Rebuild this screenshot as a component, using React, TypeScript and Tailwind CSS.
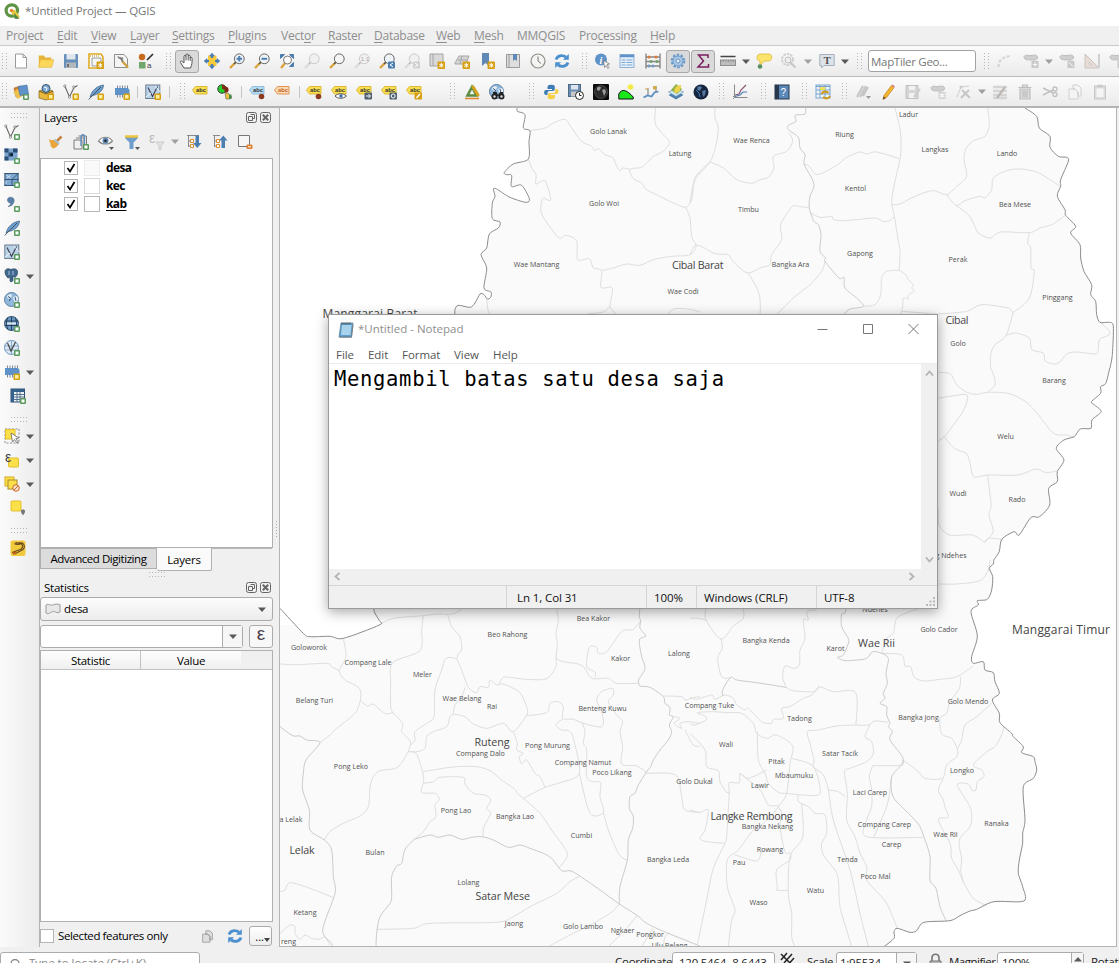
import React from "react";

/* ---------- geometry helpers ---------- */

function smooth(points: string, close = "") {
  const p = points.trim().split(/\s+/).map((s) => s.split(",").map(Number));
  let d = `M${p[0][0]} ${p[0][1]}`;
  for (let i = 0; i < p.length - 1; i++) {
    const a = p[Math.max(0, i - 1)], b = p[i], c = p[i + 1], e = p[Math.min(p.length - 1, i + 2)];
    const k = 7;
    d += `C${(b[0] + (c[0] - a[0]) / k).toFixed(1)} ${(b[1] + (c[1] - a[1]) / k).toFixed(1)} ${(c[0] - (e[0] - b[0]) / k).toFixed(1)} ${(c[1] - (e[1] - b[1]) / k).toFixed(1)} ${c[0]} ${c[1]}`;
  }
  return d + close;
}

type Sheet = { at: string; coast?: string; sea?: string; district: string[]; village: string[] };

const sheets: Sheet[] = [
  {
    at: "translate(280 108) scale(.33333)",
    coast: "712,0 712,10 735,20 730,60 750,68 747,100 745,153 700,168 673,193 680,200 695,202 693,232 700,236 725,232 748,272 738,283 690,268 650,243 640,243 645,265 637,285 637,332 660,342 655,360 628,378 620,420 603,440 620,480 612,540 633,552 632,568 622,573 612,560 600,558 585,585 570,598 535,592 525,605 525,630",
    sea: "L525 1500 L0 1500 L0 0Z",
    district: [],
    village: [
      "750,68 795,60 820,45 855,34 875,60 905,100 935,115 945,128 955,122 975,140 1000,150 1010,175 1020,188 1028,180 1050,184",
      "1127,0 1127,50 1166,98 1166,110 1150,130 1120,145 1105,160 1085,178 1050,184 1060,212 1085,225 1100,245 1150,270 1180,285 1217,298 1235,275 1243,215 1260,190 1290,162",
      "1217,298 1230,330 1235,385 1248,412 1243,428 1225,442 1175,445 1120,455 1080,472 1040,468 1000,480 965,488",
      "745,153 755,180 768,200 768,228 795,218 812,270 808,278 788,272 785,318 835,388 858,382 890,398 893,455 928,452 940,480 965,488 963,538 997,540 990,595 1005,615 1010,630",
      "990,595 970,612 920,618",
      "620,570 625,610 640,630",
      "1163,618 1185,602 1230,604 1260,612",
    ],
  },
  {
    at: "translate(690 108) scale(.33333)",
    coast: "1005,0 1040,25 1048,60 1080,85 1080,118 1105,145 1130,148 1135,160 1112,215 1112,235 1102,265 1125,305 1127,322 1157,355 1142,375 1170,410 1172,450 1182,490 1205,530 1202,560 1217,580 1220,620 1230,643 1258,643 1270,655 1267,740 1260,780",
    sea: "L1285 780 L1285 0Z",
    district: ["347,0 345,18 315,22 318,40 295,52 295,65 325,88 330,120 345,140 342,168 365,210 372,235 360,265 358,300 372,340 385,350 393,380 390,430 407,450 405,460 447,510 462,508 465,540 500,570 520,595 480,603 463,618"],
    village: [
      "75,0 75,30 85,60 77,115 60,162 15,215 0,285",
      "60,162 100,180 140,215 185,226 210,215 235,208 252,180 250,145 290,130 308,100 298,75",
      "342,168 358,175 382,200 440,172 470,148 510,132 530,138 560,132 628,152",
      "615,0 625,40 632,80 632,140 615,220 605,280 613,325 625,400 630,430 628,487",
      "605,290 630,288 660,272 700,255 732,248 770,260 800,235 830,205 822,155 828,122 850,98 885,85 898,50 893,0",
      "770,260 798,292 825,278 870,265 885,270 905,245 910,210 950,188 992,183 1040,192 1075,212 1110,235",
      "798,292 835,320 850,345 865,375 900,390 932,372 1018,374 1050,360 1085,350 1125,323",
      "1018,374 1013,405 1022,420 1023,480 1033,490 1018,570 970,612 955,600 875,590 830,610 740,618 700,615 635,610",
      "628,487 648,500 655,515 670,530 665,540 673,548 655,562 655,573 640,570 638,595 633,618",
      "520,595 555,590 572,560 575,510 590,490 628,487",
      "358,312 390,328 425,325 430,335 460,338 500,335 555,330 580,340 600,338 613,325",
      "358,300 325,295 305,297 272,350 275,395 245,440 240,470 215,478 175,495 150,480 125,455 115,440 80,438 60,430 40,418 15,412 0,440",
      "175,495 205,550 211,590 210,618",
      "405,460 395,490 360,530 310,570 262,618",
      "970,612 948,683 915,710 902,740 902,780",
      "948,683 975,675 1018,690 1025,725 1060,735 1065,758 1090,768 1110,762 1130,738 1160,732 1215,738 1225,725 1228,695 1258,680 1255,665 1230,643",
    ],
  },
  {
    at: "translate(320 305) scale(.50955 .33333)",
    coast: "1550,189 1542,235 1532,245 1532,265 1514,290 1520,300 1533,320 1515,345 1513,370 1492,372 1480,395 1460,405 1445,430 1460,465 1447,500 1447,530 1430,550 1432,600 1412,635 1395,638 1372,690 1362,680 1338,703 1333,740 1322,765",
    sea: "L1561 765 L1561 189Z",
    district: [],
    village: [
      "1316,189 1322,210 1325,240 1310,262",
      "1195,203 1235,205 1250,240 1270,262 1290,268 1310,262 1350,265 1385,290 1410,330 1440,385 1465,390 1480,398",
      "1195,285 1240,273 1270,270 1265,310 1248,350 1225,395 1205,415",
      "1225,395 1245,430 1268,445 1275,470 1283,515 1310,510 1370,510 1405,492 1425,503 1447,497",
      "1310,510 1317,600 1313,630 1321,680 1304,712 1312,700 1338,703",
      "1205,590 1213,610 1215,660 1235,690 1280,690 1304,712",
    ],
  },
  {
    at: "translate(280 600) scale(.33333)",
    coast: "0,25 70,100 90,110 150,109 190,115 298,75 298,62 283,35 280,0",
    sea: "L0 0Z",
    district: [
      "0,380 20,395 40,408 60,408 80,420 120,428 78,480 70,520 68,570 88,630 90,690 133,720 155,750 160,830 165,880 128,990 155,1030 155,1040",
      "1075,240 1080,258 1110,262 1150,290 1155,310 1170,322 1168,345 1180,350 1168,375 1175,395 1165,420 1140,450 1120,480 1112,500 1100,515 1075,555 1065,580 1050,590 1048,625 1060,650 1058,685 1045,720 1042,780 1020,860 1018,912",
      "403,718 450,705 475,712 510,705 545,718 575,712 605,710 640,720 685,742 720,735 750,745 790,760 815,775 845,812 870,812 895,825 960,870 1018,912 1070,945 1100,970 1160,998 1260,1038",
      "403,718 375,748 365,790 350,798 335,830 335,890 330,910 300,950 290,1000 288,1040",
      "1080,20 1078,50 1082,62 1080,85 1097,108 1078,120 1085,170 1095,205 1075,240",
    ],
    village: [
      "190,115 198,170 178,212 195,240 225,255 240,268 242,295 232,330 215,350 170,385 150,405 120,428",
      "0,192 50,194 140,190 155,200 178,212",
      "298,75 340,55 430,47 470,42 503,43 525,40 545,28",
      "430,47 425,90 420,152 338,188 332,250 332,320 340,340",
      "240,300 262,318 280,312 300,330 320,342 340,340 368,372 365,395 392,432 355,500 300,512 280,530 270,560 265,620 240,648 190,670 150,695 133,720",
      "503,43 515,80 540,110 545,150 535,160 530,175 510,172 495,178 485,210 465,270 462,350 440,370 405,395 405,420 392,435",
      "530,175 545,210 565,262 590,278 600,260 625,262 630,240 650,255 670,252 720,278 740,322 740,345 700,395 670,370 620,385 580,372 555,350 520,342",
      "555,262 545,290 525,315 520,342",
      "520,342 510,350 500,380 460,395 440,410 435,445 410,455 385,455 410,462 430,525 430,550",
      "655,255 670,232 690,232 740,238 800,236 828,200 828,175 832,130 828,100 835,60 828,20",
      "828,175 850,185 895,192 915,205 935,235 985,235 1010,250 1075,250",
      "945,232 945,215 920,200 928,142 950,142 955,160 980,155 1020,100 1035,90 1060,88 1082,62",
      "1150,288 1205,290 1215,300 1245,292 1260,290",
      "1180,350 1200,355 1182,370 1205,385 1200,370 1225,365 1260,370",
      "1215,390 1225,410 1240,435 1260,440",
      "740,347 800,338 810,310 835,305 850,320 848,355 880,358 910,370 965,380 968,345 950,300 965,275 998,265 1000,285 985,305 1010,345 1028,365 1020,395 1028,440 1025,492 1070,498 1100,518",
      "1100,520 1170,520 1195,535 1205,590 1215,630 1260,637",
      "848,357 828,374 845,390 865,392 880,415 898,520 840,548 795,562 730,595",
      "700,395 712,430 710,450 730,460 718,470 725,492 740,480 765,520 780,530 795,562",
      "430,515 470,508 530,500 590,500 630,512 665,540 705,568 710,578 730,595 780,640 815,690 862,760 838,803",
      "430,550 460,545 480,532 550,532 555,552 580,580 615,585 632,600 620,625 632,640 612,680 608,712",
      "430,550 425,578 465,580 478,598 465,615 468,650 450,665 430,695 403,718",
      "290,988 400,985 450,970 648,967 700,950 750,920 830,880 870,845 900,828",
      "1018,912 990,940 930,975 870,1005 805,1040",
      "1072,945 1040,985 985,1040",
      "1120,985 1085,1040",
      "1170,998 1155,1010 1150,1040",
      "905,365 915,395 910,430 920,450 920,530 940,545 962,548 960,590 970,637 930,640 898,520",
      "970,637 985,690 1010,750 1025,772 1042,780",
      "0,875 15,870 30,848 90,865 160,893",
      "0,1000 30,975 45,980 45,1000 60,1018 75,1005 95,1015 115,1018 135,1012 150,1035",
    ],
  },
  {
    at: "translate(690 560) scale(.33333)",
    coast: "911,0 910,12 898,25 908,50 905,90 892,118 862,122 865,135 843,155 862,228 845,290 850,310 880,305 885,330 910,338 915,365 928,400 907,420 928,460 930,488 965,520 970,530 1000,560 995,578 1030,590 1035,605 1040,630 1030,655 1000,680 1005,780 998,820 998,850 988,900 985,940 998,980 1002,1023 912,1025 860,1048 840,1053 810,1067 780,1082 702,1087 680,1112 660,1117 622,1105 612,1115 612,1135 582,1160",
    sea: "L1285 1160 L1285 0Z",
    district: [
      "468,145 465,160 455,162 455,200 475,235 475,250 460,285 442,292 465,302 500,300 530,295 548,275 575,280 595,295 588,340 592,370 580,400 585,415 570,430 590,440 590,465 600,490 595,500 607,515 600,540 640,600 605,650 608,708 640,745 670,775 690,800 705,840 720,890 720,960 738,985 750,1040 768,1082",
      "98,408 98,390 122,352 140,360 200,368 288,382",
    ],
    village: [
      "745,72 800,72 870,62 895,30 900,0",
      "48,145 48,180 93,237 130,198 160,175 160,145",
      "0,175 25,175 48,180",
      "93,237 97,265 83,295 95,350 122,354",
      "288,382 278,350 285,318 310,325 328,315 330,270 345,235 340,180 355,180 350,155 380,150",
      "288,382 310,392 370,395 388,380 430,395 497,398 498,495",
      "575,280 590,235 610,220 620,175 660,155 690,145",
      "575,280 635,285 645,318 662,320 672,350 700,363 750,358 800,350 850,318",
      "812,350 808,385 780,425 770,460 750,475 755,522 785,535 802,567 800,590 770,615 757,655 705,655 685,635 640,602 635,616 548,617",
      "905,430 860,470 825,495 815,540 802,567",
      "942,500 935,525 915,560 890,575 850,615 875,630 882,650 862,665 858,690 845,690 835,672 802,675 840,740 845,770 840,800 808,840 815,900 812,930 820,965",
      "760,655 745,690 760,720 765,742 775,772 745,780 780,850 785,895 805,930 820,965 850,1015 890,1037",
      "0,412 20,418 65,405 75,418 105,405 130,415 140,435 165,450 175,445 215,485 245,490 250,478 280,475 275,445 300,440 340,415 365,405 388,380",
      "0,490 15,495 48,480 45,468 22,458 70,455 110,458 155,460 190,490 200,520 230,535 260,525 308,558 300,610 290,700 265,740",
      "202,515 205,600 225,640 235,670 265,697 290,700 340,705 390,700 370,620 305,595",
      "0,520 45,570 50,620 85,632 90,665 108,695 118,697",
      "498,495 440,498 385,510 352,515 360,550 372,600 370,620 400,645 415,690 430,780 480,930 510,1060 535,1160",
      "498,495 535,495 555,483 595,487",
      "540,495 525,530 545,545 550,580 530,605 480,625 463,635 472,700 470,780 495,830 510,880 530,920 530,960 560,995 590,1030 622,1105",
      "548,617 538,650 545,690 545,740 530,780 530,830 700,832",
      "605,650 600,690 590,740 552,830",
      "415,690 445,695 465,710",
      "118,695 118,668 148,668 150,640 175,655 230,630",
      "118,695 110,830 105,850 70,925 50,1020 22,1155",
      "150,640 210,690 235,735 265,740 220,790 190,810 145,870 112,900 112,980 135,1050 125,1080 115,1160",
      "135,885 200,903 215,875 230,870",
      "265,740 275,760 270,800 285,875 300,880 300,900 260,930 262,980 260,990 295,992",
      "325,705 325,725 355,740 375,760 405,765 410,820 395,850 400,885 435,930 445,960 450,1040 470,1110 485,1160",
      "335,730 340,800 335,840 300,890 295,1000 305,1060 305,1130 315,1160",
      "0,750 30,757 55,750 45,810 30,835 50,845 105,850",
    ],
  },
];

const villages: [string, number, number][] = [
  ["Golo Lanak", 608.5, 132], ["Latung", 680, 154], ["Golo Woi", 604, 204], ["Wae Mantang", 536.5, 265], ["Wae Codi", 683, 292],
  ["Wae Renca", 751.5, 141], ["Riung", 844.5, 135], ["Ladur", 908.5, 115], ["Langkas", 935, 150], ["Lando", 1007, 154],
  ["Kentol", 855.5, 188.5], ["Timbu", 748.5, 210], ["Bea Mese", 1015, 205], ["Bangka Ara", 790.5, 264.5], ["Gapong", 860, 254],
  ["Perak", 958, 260], ["Pinggang", 1057.5, 297.5], ["Golo", 958, 343.5], ["Barang", 1054, 380.5], ["Welu", 1005.5, 436.5],
  ["Wudi", 958, 494], ["Rado", 1017, 500], ["g Ndehes", 951, 556], ["Ndehes", 875, 610], ["Beo Rahong", 507.5, 635],
  ["Bea Kakor", 593.5, 619], ["Goloworok", 309, 647.5], ["Compang Lale", 368, 662.5], ["Meler", 422.5, 674.5], ["Kakor", 620.5, 659],
  ["Lalong", 679, 653.5], ["Belang Turi", 314.5, 701], ["Wae Belang", 462, 699], ["Rai", 492, 707], ["Benteng Kuwu", 602.5, 709],
  ["Compang Tuke", 709.5, 705.5], ["Pong Murung", 547.5, 746], ["Compang Dalo", 480.5, 754], ["Pong Leko", 351, 767],
  ["Compang Namut", 583, 763], ["Poco Likang", 612, 773], ["Golo Dukal", 694.5, 782], ["Pong Lao", 456, 811], ["Bangka Lao", 515, 816.5],
  ["Cumbi", 581.5, 836], ["a Lelak", 291, 820], ["Bulan", 375, 853], ["Bangka Leda", 668, 860], ["Lolang", 468.5, 882.5],
  ["Ketang", 305, 912.5], ["Jaong", 514, 924], ["Golo Lambo", 583, 927], ["Ngkaer", 622.5, 931], ["Pongkor", 650, 935],
  ["Ulu Belang", 669.5, 946], ["reng", 288.5, 942], ["Bangka Kenda", 766, 641], ["Karot", 835.5, 649], ["Golo Cador", 939, 630],
  ["Golo Mendo", 968, 702], ["Bangka Jong", 918.5, 718], ["Tadong", 799.5, 719], ["Wali", 726, 744.5], ["Satar Tacik", 840, 753.5],
  ["Pitak", 776.5, 761.5], ["Mbaumuku", 794, 776], ["Lawir", 760, 786], ["Longko", 962, 770.5], ["Laci Carep", 870, 793],
  ["Compang Carep", 884.5, 825], ["Wae Rii", 945.5, 834.5], ["Ranaka", 996.5, 824], ["Carep", 891.5, 845], ["Bangka Nekang", 767.5, 826.5],
  ["Rowang", 770, 849.5], ["Pau", 739, 862.5], ["Tenda", 847.5, 859.5], ["Poco Mal", 875.5, 876.5], ["Watu", 815.5, 890.5], ["Waso", 758.5, 903],
];

const districts: [string, number, number, number][] = [
  ["Cibal Barat", 672, 268.5, 51.5], ["Cibal", 945.5, 324, 23], ["Wae Rii", 858, 647, 37], ["Ruteng", 474.5, 745.5, 35],
  ["Lelak", 289.5, 853.5, 25], ["Satar Mese", 475.5, 899.5, 54.5], ["Langke Rembong", 710.5, 819.5, 82],
];

function MapCanvas() {
  return (
    <svg className="block h-full w-full" viewBox="280 108 836 838" preserveAspectRatio="xMinYMin slice">
      <rect x="280" y="108" width="837" height="840" fill="#fafafa" />
      <rect x="280" y="300" width="60" height="325" fill="#fff" />
      {sheets.map((s, i) => (
        <g key={i} transform={s.at} fill="none" strokeLinejoin="round">
          {s.coast && <path d={smooth(s.coast, s.sea)} fill="#fff" />}
          {s.village.map((v, j) => <path key={j} d={smooth(v)} stroke="#dedede" vectorEffect="non-scaling-stroke" />)}
          {s.district.map((v, j) => <path key={j} d={smooth(v)} stroke="#cbcbcb" vectorEffect="non-scaling-stroke" />)}
          {s.coast && <path d={smooth(s.coast)} stroke="#8c8c8c" vectorEffect="non-scaling-stroke" />}
        </g>
      ))}
      <g fontFamily="'Open Sans', 'Noto Sans', sans-serif" fill="#505050">
        {villages.map(([t, x, y]) => (
          <text key={t + x} x={x} y={y + 2} fontSize="7.1" textAnchor="middle">{t}</text>
        ))}
        {districts.map(([t, x, y, w]) => (
          <text key={t} x={x} y={y} fontSize="10.7" textLength={w} fill="#454545">{t}</text>
        ))}
        <text x="1012" y="634" fontSize="12" textLength="98" fill="#454545">Manggarai Timur</text>
        <text x="322.5" y="318" fontSize="12" textLength="95" fill="#454545">Manggarai Barat</text>
      </g>
    </svg>
  );
}

/* ---------- icons, 16 x 16 grid ---------- */

const lens = (c: string, h: string, f = "#eef4f8") => (
  <>
    <path d="M6.500 9.500 1 15" stroke={h} strokeWidth="2.400" />
    <path d="M6.800 9.200 5 11" stroke="#555" strokeWidth="1.600" opacity={c === "#666" ? 1 : 0.25} />
    <circle cx="10.300" cy="5.800" r="4.900" fill={f} stroke={c} />
  </>
);
const plus = (
  <g>
    <rect x="10" y="10" width="6" height="6" rx="1" fill="#5a9a5e" />
    <rect x="11.500" y="11.500" width="3" height="3" fill="#fff" />
  </g>
);
const gold = (
  <g>
    <rect x="9.500" y="9.500" width="6.500" height="6.500" rx="1" fill="#d6a012" />
    <rect x="11" y="11" width="3.500" height="3.500" fill="#fff0a0" />
  </g>
);
const star = (
  <g>
    <rect x="8.500" y="8.500" width="7.500" height="7.500" rx="1" fill="#d6a012" />
    <path d="M12.300 10v4.600M10.300 11.200l4 2.400M14.300 11.200l-4 2.400" stroke="#fff" />
  </g>
);
const vee = (
  <>
    <path d="M2 2.500 6.500 13 11 3.500 14.500 1.500" fill="none" stroke="#666" strokeWidth="1.100" />
    <g fill="#fff" stroke="#777" strokeWidth=".8"><circle cx="1.800" cy="2" r="1.100" /><circle cx="6.500" cy="13.200" r="1.100" /><circle cx="10.800" cy="3" r="1.100" /></g>
  </>
);
const feather = (
  <>
    <path d="M2 13C4 6 9 2 15.500 1c0 5-5 10-11.500 10.500z" fill="#6f9fcd" stroke="#3c6186" strokeWidth=".7" />
    <path d="M.7 15.500 13 3" stroke="#3a4a5a" strokeWidth=".9" />
  </>
);
const chip = (
  <>
    <path d="M3.500 1.500v12M6 1.500v12M8.500 1.500v12M11 1.500v12M13.500 1.500v12" stroke="#7d8b98" />
    <path d="M1 4h13l1.500 2v5H1z" fill="#5f92c8" />
  </>
);
const vbox = (
  <>
    <rect x=".8" y="1" width="14" height="13.500" fill="#b9d2e8" stroke="#6c7d8d" />
    <path d="M3 3.500 7.500 12.500 12.500 2.500" fill="none" stroke="#445" strokeWidth="1.200" />
    <path d="m1 13 5-4M10 2l5 6" stroke="#f3f8fc" />
  </>
);
const globe = (
  <>
    <circle cx="7.500" cy="7.500" r="7" fill="#8fb8dc" stroke="#5e81a3" />
    <path d="M3 4c2-2 4-2 5-1L7 6 5 7 3.500 6zM9 5l4-1 1.500 3-2 4-2-1-1-3z" fill="#e9eff4" />
    <path d="M4 4.500 6.500 6 5.500 9M11 5l1 4" stroke="#34597c" fill="none" />
  </>
);
const tag = (f: string, s: string, t = "#333") => (
  <>
    <path d="M.5 6 3.500 2.500h11.500v7.500h-11.500z" fill={f} stroke={s} strokeWidth=".8" />
    <text x="4" y="8.300" fontSize="5.800" fontWeight="700" fill={t} fontFamily="'Liberation Sans', sans-serif">abc</text>
  </>
);
const blob = <path d="M1 3.500C3 1 5 3 8 2.500s6-1 6.500 1.500-3 3.500-6 3-7 1-7.500-3.500z" fill="#cfcfcf" stroke="#bdbdbd" />;
const sheet2 = (c: string, f: string) => <path d="M2 5h6l3 3v7H2zM6 1h5l3 3v8h-3V8L8 5H6z" fill={f} stroke={c} strokeWidth=".9" />;
const refresh = (
  <g fill="none" stroke="#4b8fcf" strokeWidth="2.800">
    <path d="M2 6.500C3.500 2.500 8 1.500 12 4" /><path d="M14 9.500c-1.500 4-6 5-10 2.500" />
    <path d="M14.800 1v5.800H9zM1.200 15V9.200H7z" fill="#4b8fcf" stroke="none" />
  </g>
);

const icons: Record<string, React.ReactNode> = {
  new: <path d="M2.500 1h7.500l3.500 3.500V15h-11zM10 1v3.500h3.500" fill="#fff" stroke="#9a9a9a" />,
  open: <><path d="M.8 14V2.500h5l1.500 2h6V7" fill="#e6b33a" /><path d="m.8 14.300 1.500-7.500h13.400l-2 7.500z" fill="#fbd75b" stroke="#e7b93c" strokeWidth=".7" /></>,
  save: <><rect x="1" y="1" width="14" height="14" rx="1" fill="#668fbb" /><rect x="3.500" y="1" width="9" height="5.500" fill="#dfe6ec" /><rect x="3" y="9.500" width="10" height="5.500" fill="#b3b8bd" /><path d="M5 11v3" stroke="#555" strokeWidth="1.500" /></>,
  layout: <><path d="M1 1h12l2 3v11H1z" fill="#fff" stroke="#e0aa25" strokeWidth="1.600" /><path d="M4 5h9v8H4z" fill="#f6f6f6" stroke="#999" /><path d="M2 3h10" stroke="#b58a20" strokeDasharray="1 1" />{star}</>,
  layouts: <><path d="M1.500 1.500H11l3.500 4v9h-13z" fill="#f4f4f4" stroke="#8e8e8e" /><path d="m9 8 6 6.500" stroke="#cf9f36" strokeWidth="2.200" /><path d="M5 3.500c1 2 3.500 2.500 5 1.500M7 4.500l3 4" stroke="#777" strokeWidth="1.600" fill="none" /></>,
  style: <><circle cx="4" cy="4" r="3.200" fill="#c76a1c" /><path d="m9 7 6-6" stroke="#333" strokeWidth="1.700" /><rect x="1" y="9" width="6.500" height="6.500" fill="#70a76a" /><text x="9" y="15" fontSize="8" fill="#444" fontFamily="'Liberation Sans', sans-serif">a</text></>,
  hand: <path d="M5 15 1.500 9.500c-.6-1.500 1-2 2-.8L5 10V3.500c0-1.500 1.800-1.500 2 0V2c.2-1.500 2-1.500 2.200 0v1c.3-1.200 2-1 2 .3V5c.3-1 1.900-.8 1.900.5 0 4 0 6-1.600 9.500zM7 3.500v4M9.200 3v4.500M11.200 4v4" fill="#fff" stroke="#444" strokeWidth=".9" />,
  pansel: <><path d="M4 2.500h8.500v10.500H4z" fill="#f5cb3c" /><path d="M8 .3 10.200 3H5.800zM8 15.700 10.200 13H5.800zM.3 8 3 5.800v4.400zM15.700 8 13 5.800v4.400z" fill="#4d7eb0" stroke="#4d7eb0" /><path d="M8 3v2M8 11v2M3 8h2M11 8h2" stroke="#4d7eb0" strokeWidth="2.200" /></>,
  zin: <>{lens("#666", "#d9a43a")}<path d="M10.300 3v5.600M7.500 5.800h5.600" stroke="#4d7eb0" strokeWidth="2" /></>,
  zout: <>{lens("#666", "#d9a43a")}<path d="M7.500 5.800h5.600" stroke="#4d7eb0" strokeWidth="2" /></>,
  zfull: <><path d="M7 9 2 15" stroke="#d9a43a" strokeWidth="2.400" /><circle cx="8.500" cy="7" r="4" fill="#fff" stroke="#777" /><path d="M1.500 1.500h4l-4 4zM14.500 1.500v4l-4-4zM14.500 13.500h-4l4-4z" fill="#4d7eb0" stroke="#4d7eb0" /></>,
  zsel: lens("#c9c9c9", "#dcdcdc", "#f1f1f1"),
  zlayer: lens("#666", "#d9a43a", "#f5f5f5"),
  znat: <>{lens("#c9c9c9", "#dcdcdc", "#f1f1f1")}<text x="6.800" y="8" fontSize="6" fill="#aaa" fontFamily="'Liberation Sans', sans-serif">1:1</text></>,
  zlast: <>{lens("#666", "#d9a43a")}<rect x="9" y="8.500" width="7" height="7" rx="1" fill="#4d7eb0" /><path d="m14 10-3 2 3 2" stroke="#fff" fill="none" /></>,
  znext: <>{lens("#c9c9c9", "#dcdcdc", "#f1f1f1")}<rect x="9" y="8.500" width="7" height="7" rx="1" fill="#d0d0d0" /><path d="m11 10 3 2-3 2" stroke="#fff" fill="none" /></>,
  mapview: <><path d="M1 1h13v12H1zM4 1v12" fill="#d9d9d9" stroke="#a4a4a4" />{star}</>,
  map3d: <><path d="m1 10 4-7h10l-3 8H1zM4 7h10M8 3l-2 8" fill="#d4d4d4" stroke="#a8a8a8" />{star}</>,
  bmnew: <><path d="M3 0h7v13l-3.500-3L3 13z" fill="#5f88b6" />{star}</>,
  bm: <><path d="M1.500 1.500h13v13h-13zM4 1.500v13" fill="#dedede" stroke="#999" /><path d="M8 1h4v7L10 6.500 8 8z" fill="#5f88b6" /></>,
  clock: <><circle cx="8" cy="8" r="7" fill="#f4f4f2" stroke="#8f8f88" strokeWidth="1.200" /><path d="M8 3.500V8l3 2.500" fill="none" stroke="#777" /></>,
  refresh,
  identify: <><circle cx="7" cy="6.500" r="6" fill="#5f92c8" /><text x="5.400" y="10.500" fontSize="10" fontStyle="italic" fontWeight="700" fill="#fff" fontFamily="'Liberation Serif', serif">i</text><path d="m9.500 7.500 1 7 1.500-2 2 3 1-1-2-3 2.500-.5z" fill="#fff" stroke="#777" strokeWidth=".8" /></>,
  table: <><rect x="1" y="1.500" width="14" height="13" fill="#e6f0f9" stroke="#8db2d6" /><path d="M1 3h14" stroke="#5f92c8" strokeWidth="2.500" /><path d="M2.500 7h4M7.500 7h6M2.500 9.500h4M7.500 9.500h6M2.500 12h4M7.500 12h6" stroke="#7ca7d1" /></>,
  abacus: <><path d="M1 .5v15M15 .5v15M1 4h14M1 8.500h14M1 13h14" stroke="#888" strokeWidth="1.400" /><g fill="#d97c3c"><circle cx="4" cy="4" r="1.600" /><circle cx="11" cy="4" r="1.600" /></g><g fill="#6ea069"><circle cx="6" cy="8.500" r="1.600" /><circle cx="12" cy="8.500" r="1.600" /></g><g fill="#7598c0"><circle cx="4" cy="13" r="1.600" /><circle cx="8" cy="13" r="1.600" /></g></>,
  gear: <><circle cx="8" cy="8" r="6.300" fill="none" stroke="#6a9acb" strokeWidth="2" strokeDasharray="2.500 1.450" /><circle cx="8" cy="8" r="5" fill="#a9c8e6" stroke="#6a9acb" /><circle cx="8" cy="8" r="2" fill="#e8eef4" stroke="#6a9acb" /></>,
  sigma: <path d="M13 5V2H3.500L8.500 8 3 14h10.500V11" fill="none" stroke="#7b1d60" strokeWidth="1.500" />,
  ruler: <><path d="M.5 3.500h15" stroke="#444" strokeWidth="1.500" /><rect x=".5" y="7" width="15" height="5.500" fill="#bdbdbd" stroke="#8f8f8f" /><path d="M.5 8h15" stroke="#777" strokeDasharray="1 1.500" /></>,
  tip: <><path d="M4 1h9c4 0 3.500 7-.5 7H8l-4 5V8C-.5 7.500.5 1 4 1z" fill="#fbe46b" stroke="#dcb93c" strokeWidth=".8" /><circle cx="4" cy="13.500" r="2.300" fill="#5a8f63" /></>,
  act: <><circle cx="6.500" cy="6.500" r="5.500" fill="none" stroke="#cfcfcf" strokeWidth="2" strokeDasharray="2.500 1" /><circle cx="7" cy="7" r="3" fill="#eee" stroke="#bdbdbd" /><path d="m9 9 5.500 5.500" stroke="#c5c5c5" strokeWidth="2" /></>,
  text: <><path d="M.8 1.500h14.400v11H5l-2.500 2.500V12.500H.8z" fill="#dde3e8" stroke="#a6b0ba" /><text x="4.500" y="11" fontSize="11" fontWeight="700" fill="#555" fontFamily="'Liberation Serif', serif">T</text></>,
  d1: <path d="M1.500 14c0-7 4-10 12-11" fill="none" stroke="#d2d2d2" strokeWidth="2" strokeDasharray="3 1.800" />,
  d2: <>{blob}<rect x="8.500" y="8" width="7" height="7" fill="#c9c9c9" /><path d="M10 11.500h4M12 9.500v4" stroke="#fff" /></>,
  d3: <>{blob}<rect x="8.500" y="8" width="7" height="7" fill="#c9c9c9" /><path d="m10 9.500 4 4" stroke="#fff" /></>,
  d4: <><path d="M1 1v14h14z" fill="#e9dcd6" stroke="#c9c3c0" /><path d="M5 9v3h3z" fill="#fafafa" stroke="#ccc" /><path d="M15 1v14" stroke="#d0d0d0" strokeWidth="2" /></>,
  addlayers: <><path d="m1 4 7-2 3 9-8 2z" fill="#d9822b" stroke="#a95f1a" strokeWidth=".6" /><path d="m.5 8 4-3 5 7-5 3z" fill="#ecc04a" /><path d="m5 2.500 9-1.500 1.500 9L7 11.500z" fill="#5f92c8" stroke="#44719f" strokeWidth=".6" />{plus}</>,
  gpkg: <><path d="m1 7 7-2 7 2v7l-7 2-7-2z" fill="#e8b93e" stroke="#7d6420" strokeWidth=".7" /><path d="m1 7 7 3 7-3" fill="none" stroke="#7d6420" /><circle cx="8" cy="4.500" r="4" fill="#7da9d4" stroke="#34526f" /><path d="m6 3 3 1-1 3" stroke="#fff" fill="none" />{gold}</>,
  vnew: <>{vee}{gold}</>, feathernew: <>{feather}{gold}</>, chipnew: <>{chip}{gold}</>, vboxnew: <>{vbox}{gold}</>,
  tagy: tag("#fbe152", "#d6ab1e"), tago: tag("#f9d9b8", "#dd8030", "#c8651a"),
  tagb: <>{tag("#b8dcf4", "#7cb2d8")}<circle cx="12.500" cy="12.500" r="2.800" fill="#8c3a1e" /></>,
  tagpin: <>{tag("#fbe152", "#d6ab1e")}<circle cx="12.500" cy="12.500" r="2.800" fill="#8c3a1e" /></>,
  tageye: <>{tag("#fbe152", "#d6ab1e")}<path d="M4 12c3-3 8-3 11.500 0-3.500 3-8.500 3-11.500 0z" fill="#fff" stroke="#555" /><circle cx="10" cy="12" r="1.700" fill="#3b6ea5" /></>,
  tagmove: <>{tag("#fbe152", "#d6ab1e")}<rect x="8.500" y="8.500" width="7.500" height="7" rx="1" fill="#51606e" /><path d="M10 12h4M12.500 10l2 2-2 2" stroke="#fff" fill="none" /></>,
  tagrot: <>{tag("#fbe152", "#d6ab1e")}<rect x="8.500" y="8.500" width="7.500" height="7" rx="1" fill="#51606e" /><circle cx="12.200" cy="12" r="2" fill="none" stroke="#fff" /></>,
  tagedit: <>{tag("#fbe152", "#d6ab1e")}<rect x="8.500" y="8.500" width="7.500" height="7" rx="1" fill="#d6a012" /><path d="m10.500 14 3.500-4" stroke="#fff" strokeWidth="1.500" /></>,
  diagram: <><circle cx="5" cy="5" r="4.200" fill="#25d32d" stroke="#333" /><path d="M5 5V.8a4.200 4.200 0 0 1 4 5.200z" fill="#842d10" /><path d="M7.500 3C10 2 12 4 11.500 6.500S8 9 7.500 8z" fill="#7c2814" /><path d="M8 9h3l4 4-2 2H9z" fill="#e5c53c" stroke="#444" strokeWidth=".5" /><path d="M12 10.500h2.500v4.500H12z" fill="#4e8b4e" /></>,
  tri: <><path d="M8 3 3.500 11.500h9z" fill="none" stroke="#5b8d45" strokeWidth="2.600" /><path d="m8.500 2 6 10" stroke="#d1a21a" strokeWidth="3" /><path d="M1 14.500h14" stroke="#dd8a36" strokeWidth="1.600" /></>,
  binoc: <>{globe}<g fill="#222"><circle cx="5.500" cy="12.500" r="3" /><circle cx="12.500" cy="12.500" r="3" /><path d="M4 8h3.500l1.500 3 2-3h3v4H4z" /></g><g fill="#ddd"><circle cx="5.500" cy="12.500" r="1.200" /><circle cx="12.500" cy="12.500" r="1.200" /></g></>,
  python: <><path d="M8 .8c-3 0-3.500 1-3.500 2.500V5H9v1H3C.5 6 .5 11 3 11h1.500V9c0-1 .7-2 2-2H10c1 0 1.800-.7 1.800-2V3C11.800 1.500 11 .8 8 .8z" fill="#3f7db5" /><path d="M8.500 15.200c3 0 3.500-1 3.500-2.500V11H7.500v-1h6c2.500 0 2.500-5 .3-5h-1.500v2c0 1-.7 2-2 2H6.500c-1 0-1.800.7-1.800 2v2c0 1.500.8 2.200 3.800 2.200z" fill="#f7cf45" /></>,
  saveclock: <><rect x=".5" y=".5" width="12" height="12" fill="#6a8db3" stroke="#4f6983" /><rect x="3" y="1" width="7" height="4.500" fill="#dde6ee" /><rect x="3" y="7.500" width="7" height="5" fill="#c7c7c7" /><circle cx="11.500" cy="11.500" r="4" fill="#fff" stroke="#222" /><path d="M11.500 9v2.500h2" stroke="#222" fill="none" /></>,
  dark: <><rect width="16" height="16" rx="1" fill="#0b0b0b" /><circle cx="8" cy="8" r="6.500" fill="#2a2a2a" stroke="#666" strokeWidth=".6" /><path d="M4 4c2-2 4-1 4 0L6 7 4 6zM9 6l3-1 1 3-2 4-1-3z" fill="#999" /></>,
  green: <><path d="M.8 15V10C4 4 9 6 15.200 13v2z" fill="#1be81b" stroke="#111" /><circle cx="12.500" cy="3" r="2.500" fill="#f7ea45" /><path d="M12.500-.5v7M9 3h7M10 .5l5 5M15 .5l-5 5" stroke="#f7ea45" strokeWidth=".7" /></>,
  road: <><path d="m.5 13.500 4-2 4 1 3-4 4-1" fill="none" stroke="#5c8fc4" strokeWidth="1.800" /><path d="M5 11V4M13 8V2" stroke="#777" /><path d="M2 5h3M10.500 2.500h2.500v2.500h-2.500z" stroke="#c9a64e" fill="#dfb545" /></>,
  stack: <><path d="m8 7 7.500 4L8 15.500.5 11z" fill="#4c7fae" /><path d="m8 4 7.500 4L8 12.500.5 8z" fill="#cfe3f0" stroke="#5b8aae" strokeWidth=".6" /><path d="m8 0 6 5-5 5-6-4z" fill="#8cb347" /><path d="M7 9C5 5 8 1 13 1c0 5-2 8-6 8z" fill="#ecd34b" /></>,
  night: <><circle cx="8" cy="8" r="7.500" fill="#16263f" /><path d="M4 3.500c2-2 4-1 5 0L7 7 4.500 6zM9 7l4-1-1 5-2 2z" fill="#58779c" /><path d="m3 6 3 3 1 4" stroke="#3b7bb8" fill="none" /></>,
  plot: <><path d="M2.500.5v13h13M1 12l1.500 1.500L1 15" fill="none" stroke="#8a8a8a" /><path d="m3 11 4-1 2-4 5-5" fill="none" stroke="#8a5475" strokeWidth="1.200" /><path d="M3 12.500 8 11l3-3h4" fill="none" stroke="#4d7eb0" strokeWidth="1.200" /></>,
  book: <><rect x="1" y="1" width="14" height="14" fill="#5a86b8" stroke="#26384c" /><rect x="1" y="1" width="4" height="14" fill="#26384c" /><text x="6.500" y="12" fontSize="10" fill="#fff" fontFamily="'Liberation Sans', sans-serif">?</text></>,
  gridref: <><rect x="1" y="1" width="14" height="13" fill="#eef5fb" stroke="#7aa3cb" /><path d="M1 2.500h14M1 6h14M1 10h14M5 1v13M10 1v13" stroke="#7aa3cb" /><rect x="5" y="3" width="5" height="3" fill="#f4df5d" /><path d="M6.500 10c1-3 5-3 7-1M15 12c-1 3-5 3-7 1" fill="none" stroke="#cf9b1c" strokeWidth="2.200" /></>,
  pens: <><path d="M2 13 8 2M5 13l6-11M8 12l5-9" stroke="#c6c6c6" strokeWidth="2.200" /><path d="M11 12h5l-2.500 3z" fill="#999" /></>,
  pencil: <><path d="m3 15.500 1-4 7.500-10 2.500 2L6.500 13.500z" fill="#f3b62c" stroke="#b9791b" strokeWidth=".7" /><path d="m11.500 1.500 2.500 2 .9-1.200L12.400.5z" fill="#de7c8a" /><path d="m3 15.500.8-3 1.900 1.400z" fill="#5b4636" /></>,
  dsave: <><path d="M1 1.500h12v13H1z" fill="#d6d6d6" stroke="#c2c2c2" /><path d="M4 2h6v4H4zM4 9h6v5H4z" fill="#f2f2f2" /><path d="m9 13 6-8" stroke="#cbcbcb" strokeWidth="2" /></>,
  dadd: <>{blob}<rect x="8.500" y="8" width="7" height="7" fill="#d2d2d2" /><path d="M12 9v5M9.500 10l5 3M14.500 10l-5 3" stroke="#fff" /></>,
  dvert: <><path d="M1 13 5 3l8-1" fill="none" stroke="#cfcfcf" /><path d="m5 14 8-8M6 6l8 8" stroke="#c6c6c6" strokeWidth="2" /><circle cx="5" cy="3" r="1.500" fill="#ccc" /></>,
  dmulti: <><path d="M1 3h14M1 7h14M1 11h14M1 14h14" stroke="#d5d5d5" strokeWidth="2.500" /><path d="m5 14 8-11" stroke="#bdb6b3" strokeWidth="2.200" /></>,
  trash: <path d="M1.500 3.500h13M5.500 3V1h5v2M3 5h10v10H3zM6 6.500v7M8 6.500v7M10 6.500v7" fill="#dcdcdc" stroke="#bdbdbd" strokeWidth="1.200" />,
  cut: <><path d="m1 4 10 5M1 11l10-5" stroke="#c0c0c0" strokeWidth="1.500" /><circle cx="13" cy="5" r="2" fill="none" stroke="#c0c0c0" strokeWidth="1.300" /><circle cx="13" cy="10.500" r="2" fill="none" stroke="#c0c0c0" strokeWidth="1.300" /></>,
  copy: sheet2("#cdcdcd", "#f4f4f4"),
  copyd: sheet2("#8f8f8f", "#dedede"),
  paste: <><rect x="2.500" y="2" width="11" height="13" fill="#dcdcdc" stroke="#c8c8c8" /><rect x="4.500" y="4.500" width="7" height="8.500" fill="#f5f5f5" /><rect x="5.500" y=".8" width="5" height="2.500" fill="#c8c8c8" /></>,
  vadd: <>{vee}{plus}</>,
  raster: <><rect x=".5" y=".5" width="13" height="12" fill="#7ba4cf" /><path d="M.5.500h4v4h-4zM9 .5h4.500v4H9zM4.500 4.500H9v4H4.500zM.5 8.500h4v4h-4z" fill="#2e4f75" /><rect x="6.500" y="5.500" width="2.500" height="2.500" fill="#12202f" />{plus}</>,
  mesh: <><rect x=".5" y="1" width="14" height="13" fill="#7ea8d2" /><path d="M.5 1.500h14M.5 7.500h14M1 1v13M14 1v12M.5 13.500h10M8 7.500v6M8 7.500l6-6" fill="none" stroke="#2f4e6e" strokeWidth=".9" /><path d="m2.500 3 4 3M6.500 3l-4 3M2 9v3" stroke="#dce8f3" strokeWidth=".9" />{plus}</>,
  comma: <><path d="M5 1.500c4-1.500 6.500 2 4.500 5.500C8.500 9.500 6 10.500 4 10.500 6.500 9 7 8 6.500 7 3 7 2.500 2.500 5 1.500z" fill="#587fa8" stroke="#456789" strokeWidth=".5" />{plus}</>,
  featheradd: <>{feather}{plus}</>, vboxadd: <>{vbox}{plus}</>,
  pg: <><path d="M1 4C1 0 5 .5 7 1.500 10 0 14 1 13.500 4.500c0 2-1 4-2.500 5L9 8v4.500c-1 2-3 1.500-3 0V9L4 10C2 8 1 6 1 4z" fill="#41698f" stroke="#27435f" strokeWidth=".7" /><path d="M5 3v4M9 3v4" stroke="#a9c5df" />{plus}</>,
  globeadd: <>{globe}{plus}</>,
  wcs: <><circle cx="7.500" cy="7.500" r="7" fill="#6b98c5" stroke="#34526f" /><path d="M1 5h13M1 9.500h13M7.500.5v14M4 1.500c-2 4-2 8 0 12M11 1.500c2 4 2 8 0 12" fill="none" stroke="#25415c" /><path d="M3 6.500h9v2H3z" fill="#dbe7f1" />{plus}</>,
  wfs: <><circle cx="7.500" cy="7.500" r="7" fill="#dfeaf4" stroke="#6c94ba" /><path d="M1 6h13M1 10h13M7.500.5v14" stroke="#88adcf" /><path d="M3.500 3 7 11l4.500-9" fill="none" stroke="#444" strokeWidth="1.200" />{plus}</>,
  grid: <><rect x="1" y="1" width="13.500" height="13" fill="#eef3f8" stroke="#2f4f70" /><path d="M1 2.500h13.500M2.500 1v13" stroke="#34608c" strokeWidth="3" /><path d="M4 6.500h10M4 9h10M4 11.500h10M7 4v10M10 4v10" stroke="#54708c" />{plus}</>,
  selrect: <><rect x="1" y="1" width="14" height="14" fill="none" stroke="#8a8a8a" strokeDasharray="2 1.500" /><rect x="1.500" y="1.500" width="9.500" height="9.500" fill="#fbe04a" stroke="#e2bf2e" /><path d="m7 5 1.500 9 2-2.500 2.500 3.500 1.200-1-2.400-3.500 3-.5z" fill="#fff" stroke="#666" strokeWidth=".8" /></>,
  seleps: <><rect x="4.500" y="6" width="10" height="9" rx="1" fill="#fbe04a" stroke="#e2bf2e" /><text x="1" y="9.500" fontSize="14" fill="#444" fontFamily="'Liberation Sans', sans-serif">ε</text></>,
  desel: <><rect x="1" y="1" width="9" height="9" fill="#fbe04a" stroke="#d6ab1e" /><rect x="4" y="4" width="9" height="9" fill="#fbe04a" stroke="#a98a2b" /><circle cx="12" cy="12" r="3.300" fill="#f8ddc8" stroke="#d06c2a" /><path d="m10 14 4-4" stroke="#d06c2a" /></>,
  selloc: <><rect x="1" y="1" width="10" height="10" rx="1" fill="#fbe04a" stroke="#e2bf2e" /><path d="M13 15.500c-3-4-2.500-6 0-6s3 2 0 6z" fill="#777" /></>,
  snake: <><rect x=".5" y=".5" width="15" height="15.500" rx="2" fill="#f1c93d" /><path d="M4.500 3.500c3 2.500 6-1 7.500 1s0 5-3 5.500-4 2-7 2.500M5.500 2.500c3 1.500 6-1 8 1.500s.5 6-3 7-3 2.500-7.500 3" fill="none" stroke="#6a4a20" strokeWidth="1.200" /><path d="m3 12.500 3 1" stroke="#c05a1c" strokeWidth="2" /></>,
  brush: <><path d="m8.500 7.500 5-5" stroke="#c58440" strokeWidth="2.500" /><path d="M1 5c2 2 5 0 7 2l3 3c-2 3-5 4.500-6 4.500-1.500-1-1-1.500-2.500-2.500 1-2-1.500-4-1.500-7z" fill="#eaa63c" /><path d="m6.500 5.500 4.500 4.500" stroke="#a9bfd4" strokeWidth="2" /></>,
  group: <><path d="M1 6h8v9H1zM3 4h8v9M5.500 2h8v9" fill="none" stroke="#7c7c7c" /><path d="M8 12V3c0-3 3.500-3 3.500 0v8" fill="none" stroke="#5a88b8" strokeWidth="1.300" />{plus}</>,
  eye: <><path d="M.5 7C4 2 11 2 14.500 7 11 11 4 11 .5 7z" fill="#fff" stroke="#8a8a8a" strokeWidth="1.200" /><circle cx="7.500" cy="6.800" r="3" fill="#5b84ae" /><circle cx="7.500" cy="6.800" r="1.200" fill="#222" /><path d="M11 13h5l-2.500 3z" fill="#555" /></>,
  funnel: <><path d="M1 2h13v2L9.500 8.500V15h-4V8.500L1 4z" fill="#6f9dcc" /><path d="M1 2.500h13" stroke="#edc53c" strokeWidth="2.500" /><path d="M11 13h5l-2.500 3z" fill="#555" /></>,
  dexp: <><text x="0" y="9" fontSize="14" fill="#bbb" fontFamily="'Liberation Sans', sans-serif">ε</text><path d="M7 8h8l-3 3.500v4H10v-4z" fill="#e3e3e3" stroke="#cacaca" /></>,
  expand: <><path d="M2.500 2v11M2.500 7h3M2.500 12h3M1 1.500h12" fill="none" stroke="#8a8a8a" /><path d="M4.500 5.500h3v3h-3zM4.500 10.500h3v3h-3z" fill="#fff" stroke="#e08a2c" /><path d="M9.500 1.500h3.500v7.500h2.500L11.300 14 7 9h2.500z" fill="#4d7eb0" /></>,
  collapse: <><path d="M2.500 2v11M2.500 7h3M2.500 12h3M1 1.500h7" fill="none" stroke="#8a8a8a" /><path d="M4.500 5.500h3v3h-3zM4.500 10.500h3v3h-3z" fill="#fff" stroke="#e08a2c" /><path d="M9.500 14h3.500V6.500h2.500L11.300 1.500 7 6.500h2.500z" fill="#4d7eb0" /></>,
  remove: <><path d="M1.500 1.500h11v11h-11z" fill="#f6f6f6" stroke="#777" /><rect x="9.500" y="10.500" width="6" height="4.500" rx="1" fill="#dd8233" /><path d="M11 12.800h3" stroke="#fff" /></>,
};

function Icon({ name, size = "size-4" }: { name: string; size?: string }) {
  return <svg className={`${size} shrink-0 overflow-visible`} viewBox="0 0 16 16" fill="none">{icons[name]}</svg>;
}

const Caret = ({ dim = false }: { dim?: boolean }) => (
  <svg className="h-[5px] w-2 shrink-0" viewBox="0 0 8 5"><path d="M0 .5h8L4 5z" fill={dim ? "#a0a0a0" : "#5a5a5a"} /></svg>
);
const GripV = () => (
  <svg className="h-[17px] w-[5px] shrink-0" viewBox="0 0 5 17"><path d="M.5 0v17M4.500 0v17" stroke="#b5b5b5" strokeDasharray="1 2" /></svg>
);
const GripH = () => (
  <svg className="h-[5px] w-[17px] shrink-0" viewBox="0 0 17 5"><path d="M0 .5h17M0 4.500h17" stroke="#b5b5b5" strokeDasharray="1 2" /></svg>
);

/* Each entry: icon (or grip / sep / caret / gap) and the width of its cell. */
type Cell = [string, number];
const fileBar: Cell[] = [
  ["grip", 8], ["new", 25], ["open", 25], ["save", 25], ["layout", 25], ["layouts", 25], ["style", 25], ["grip", 20], ["gap", -4],
  ["!hand", 25], ["pansel", 25], ["zin", 25], ["zout", 25], ["zfull", 25], ["zsel", 25], ["zlayer", 25], ["znat", 25], ["zlast", 25], ["znext", 25],
  ["mapview", 25], ["map3d", 25], ["bmnew", 26], ["bm", 25], ["clock", 25], ["refresh", 24], ["grip", 20], ["gap", -5],
  ["identify", 25], ["table", 26], ["abacus", 25], ["!gear", 25], ["!sigma", 25], ["ruler", 25], ["caret", 11], ["tip", 26], ["act", 24], ["dcaret", 13], ["text", 25], ["caret", 12],
  ["grip", 17],
];
const fileBarEnd: Cell[] = [["grip", 20], ["gap", -4], ["d1", 26], ["d2", 25], ["dcaret", 11], ["d3", 26], ["d4", 24], ["d3", 25]];
const layerBar: Cell[] = [
  ["grip", 8], ["addlayers", 25], ["gpkg", 25], ["vnew", 25], ["feathernew", 26], ["chipnew", 25], ["sep", 6], ["vboxnew", 26], ["sep", 6],
  ["gap", 6], ["grip", 8], ["gap", 1], ["tagy", 25], ["diagram", 25], ["sep", 8], ["tagb", 24], ["tago", 25], ["sep", 10], ["tagpin", 20], ["gap", 2], ["tageye", 25], ["tagmove", 25], ["tagrot", 25], ["tagedit", 25],
  ["gap", 22], ["grip", 8], ["gap", 3], ["tri", 25], ["binoc", 25], ["gap", 18], ["grip", 8], ["gap", 3],
  ["python", 25], ["saveclock", 25], ["dark", 25], ["green", 25], ["road", 25], ["stack", 25], ["night", 25], ["gap", 4], ["grip", 8], ["gap", 3],
  ["plot", 24], ["gap", 7], ["grip", 8], ["gap", 3], ["book", 24], ["gap", 6], ["grip", 8], ["gap", 3], ["gridref", 24], ["gap", 5], ["grip", 8], ["gap", 3],
  ["pens", 24], ["pencil", 25], ["dsave", 25], ["dadd", 26], ["dvert", 25], ["dcaret", 11], ["dmulti", 25], ["trash", 25], ["cut", 25], ["copy", 25], ["paste", 25],
];

function Cells({ items }: { items: Cell[] }) {
  return (
    <>
      {items.map(([name, w], i) => {
        const on = name[0] === "!";
        const box = w < 0 ? { marginLeft: w } : { width: w };
        return (
          <div key={i} style={box} className="flex h-full shrink-0 items-center justify-center">
            {name === "grip" ? <GripV />
              : name === "sep" ? <div className="h-3 w-px bg-[#c6c6c6]" />
              : name === "gap" ? null
              : name === "caret" || name === "dcaret" ? <Caret dim={name === "dcaret"} />
              : on ? <div className="flex h-[23px] w-6 shrink-0 items-center justify-center rounded-[3px] border border-[#a8a8a8] bg-[#dadada]"><Icon name={name.slice(1)} /></div>
              : <Icon name={name} />}
          </div>
        );
      })}
    </>
  );
}

/* Menu entries: text before the mnemonic, the mnemonic, the rest, the cell width. */
const menus: [string, string, string, number][] = [
  ["Pro", "j", "ect", 51], ["", "E", "dit", 34], ["", "V", "iew", 39], ["", "L", "ayer", 42], ["", "S", "ettings", 56], ["", "P", "lugins", 53],
  ["Vect", "o", "r", 47], ["", "R", "aster", 46], ["", "D", "atabase", 62], ["", "W", "eb", 38], ["", "M", "esh", 43], ["MMQGIS", "", "", 62], ["Pro", "c", "essing", 71], ["", "H", "elp", 30],
];

const sideTop: [string, boolean, boolean][] = [
  ["vadd", false, false], ["raster", false, false], ["mesh", false, false], ["comma", false, false], ["featheradd", false, false], ["vboxadd", false, false],
  ["pg", true, false], ["globeadd", false, false], ["wcs", false, false], ["wfs", false, false], ["chipnew", true, false], ["grid", false, true],
];
const sideMid: [string, boolean, boolean][] = [["selrect", true, false], ["seleps", true, false], ["desel", true, false], ["selloc", false, true]];

function SideRow({ item: [name, caret, inset] }: { item: [string, boolean, boolean] }) {
  return (
    <div className={`flex h-6 shrink-0 items-center gap-[6px] ${inset ? "pl-[10px]" : "pl-1"}`}>
      <Icon name={name} />
      {caret && <Caret />}
    </div>
  );
}

function DockTitle({ title }: { title: string }) {
  return (
    <div className="flex h-[19px] shrink-0 items-center pr-2 pl-1">
      <span className="flex-1 text-[11.5px] tracking-[-0.25px] text-black">{title}</span>
      <svg className="h-[11px] w-[25px]" viewBox="0 0 25 11" fill="none" stroke="#666">
        <rect x=".5" y=".5" width="10" height="10" rx="2" />
        <path d="M4.500 2.500h4v4h-2M2.500 4.500h4v4h-4z" />
        <rect x="14.500" y=".5" width="10" height="10" rx="2" />
        <path d="m16.800 2.800 5.400 5.400M22.200 2.800l-5.400 5.400" strokeWidth="2" />
      </svg>
    </div>
  );
}

const layers = [
  { name: "desa", swatch: "border-[#ececec] bg-[#fafafa]", text: "" },
  { name: "kec", swatch: "border-[#d8d8d8] bg-white", text: "" },
  { name: "kab", swatch: "border-[#b8b8b8] bg-white", text: "underline" },
];

function Docks() {
  return (
    <div className="flex w-[240px] shrink-0 flex-col border-l border-[#b4b4b4]">
      <DockTitle title="Layers" />
      <div className="flex h-[31px] shrink-0 items-center pb-[2px] pl-[3px]">
        <Cells items={[["brush", 25], ["group", 25], ["eye", 26], ["funnel", 25], ["dexp", 25], ["dcaret", 12], ["expand", 26], ["collapse", 25], ["remove", 25]]} />
      </div>
      <div className="h-[390px] w-[233px] shrink-0 border border-[#b0b0b0] bg-white">
        {layers.map((l) => (
          <div key={l.name} className="flex h-[18px] items-center pl-[23px]">
            <div className="flex size-[14px] items-center justify-center border border-[#b4b4b4]">
              <svg className="size-[10px]" viewBox="0 0 10 10"><path d="m1.500 5 2.500 3.500L8.500 1" fill="none" stroke="#000" strokeWidth="1.700" /></svg>
            </div>
            <div className={`ml-[6px] size-4 border ${l.swatch}`} />
            <span className={`ml-[6px] text-[12px] font-bold tracking-[-0.6px] underline-offset-2 ${l.text}`}>{l.name}</span>
          </div>
        ))}
      </div>
      <div className="flex h-[24px] shrink-0 items-start text-[11.5px] tracking-[-0.45px]">
        <div className="flex h-[21px] w-[117px] items-center justify-center border border-[#b0b0b0] bg-[#dcdcdc] whitespace-nowrap">Advanced Digitizing</div>
        <div className="flex h-[23px] w-[55px] items-center justify-center rounded-b-[2px] border border-t-0 border-l-0 border-[#b0b0b0] bg-[#fafafa] pt-px tracking-[-0.25px]">Layers</div>
        <div className="mr-[7px] h-px flex-1 bg-[#b8b8b8]" />
      </div>
      <div className="flex h-[6px] shrink-0 justify-center pr-1"><GripH /></div>
      <DockTitle title="Statistics" />
      <div className="flex h-6 w-[233px] shrink-0 items-center rounded-[3px] border border-[#ababab] bg-[linear-gradient(#fdfdfd,#ececec)] pr-[6px] pl-1">
        <svg className="h-3 w-4" viewBox="0 0 16 12"><path d="M1 2c2-2 4 1 6.500 0S13 1 15 1.500V9c-3 2-5-1-7-.5S3 12 1 10z" fill="#e8e8e8" stroke="#999" /></svg>
        <span className="ml-[3px] flex-1 text-[11.5px] tracking-[-0.3px]">desa</span>
        <Caret />
      </div>
      <div className="mt-[3px] flex h-[24px] shrink-0 items-center gap-[6px]">
        <div className="flex h-[23px] w-[203px] items-center rounded-[3px] border border-[#ababab] bg-white">
          <div className="flex-1" />
          <div className="flex h-full w-5 items-center justify-center border-l border-[#ababab] bg-[#f6f6f6]"><Caret /></div>
        </div>
        <div className="flex h-[23px] w-6 items-center justify-center rounded-[3px] border border-[#ababab] bg-[#f8f8f8] pb-[3px] font-['Liberation_Sans',sans-serif] text-[19px] text-[#4d3f49]">ε</div>
      </div>
      <div className="mt-[2px] flex h-[272px] w-[233px] shrink-0 flex-col border border-[#b0b0b0] bg-white">
        <div className="flex h-[19px] border-b border-[#c2c2c2] text-[11.5px] tracking-[-0.3px]">
          <div className="flex w-[100px] items-center justify-center border-r border-[#c2c2c2] bg-[linear-gradient(#fefefe,#efefef)] pt-[2px]">Statistic</div>
          <div className="flex w-[100px] items-center justify-center bg-[linear-gradient(#fefefe,#efefef)] pt-[2px]">Value</div>
          <div className="flex-1 bg-[#f0f0f0]" />
        </div>
      </div>
      <div className="flex flex-1 items-center pt-[3px]">
        <div className="size-[14px] border border-[#b4b4b4] bg-white" />
        <span className="ml-1 w-[143px] text-[11.5px] tracking-[-0.4px] whitespace-nowrap">Selected features only</span>
        <Icon name="copyd" size="size-[13px]" />
        <div className="ml-[13px]"><Icon name="refresh" /></div>
        <div className="ml-[6px] flex h-5 w-[23px] items-end justify-end rounded-[3px] border border-[#ababab] bg-[linear-gradient(#fff,#ededed)] pr-[1px] text-[11px] leading-[16px]">...<div className="mb-[3px] w-[6px]"><svg className="h-1 w-[6px]" viewBox="0 0 6 4"><path d="M0 0h6L3 4z" fill="#444" /></svg></div></div>
      </div>
    </div>
  );
}

function Notepad() {
  return (
    <div className="absolute top-[314px] left-[328px] flex h-[295px] w-[610px] flex-col border border-[#9a9a9a] bg-white shadow-[0_3px_12px_rgba(0,0,0,0.35)]">
      <div className="flex h-[29px] shrink-0 items-center pb-px pl-[9px]">
        <svg className="h-[17px] w-4" viewBox="0 0 16 17"><path d="M3 2h12l-1.500 14H1z" fill="#5da0cf" stroke="#59788e" strokeWidth=".7" /><path d="M4 4h9.500L12.500 14H3z" fill="#a9d2ec" /><path d="M4 1.500v2M6 1.500v2M8 1.500v2M10 1.500v2M12 1.500v2" stroke="#555" /><path d="M1.500 16.300h12L15 4" fill="none" stroke="#777" strokeWidth=".8" /></svg>
        <span className="ml-1 flex-1 text-[11.5px] text-[#8f8f8f]">*Untitled - Notepad</span>
        <svg className="mr-[17px] h-3 w-[103px]" viewBox="0 0 103 12" fill="none" stroke="#777"><path d="M.5 6.500h10M46.500 1.500h9v9h-9zM91.500 1l10 10M101.500 1l-10 10" /></svg>
      </div>
      <div className="flex h-[20px] shrink-0 items-center border-b border-[#ececec] pt-[3px] pl-[7px] text-[11.5px] tracking-[-0.05px] text-[#555]">
        <span className="w-[32px]">File</span><span className="w-[34px]">Edit</span><span className="w-[52px]">Format</span><span className="w-[39px]">View</span><span>Help</span>
      </div>
      <div className="flex h-[205px] shrink-0">
        <div className="flex-1 pl-[5px] font-['DejaVu_Sans_Mono',monospace] text-[20.5px] leading-[31px] tracking-[0.68px] whitespace-pre text-black">Mengambil batas satu desa saja</div>
        <div className="flex w-4 flex-col items-center justify-between bg-[#f0f0f0] py-[6px]">
          <svg className="h-[6px] w-[9px]" viewBox="0 0 9 6"><path d="m1 5.500 3.500-4 3.500 4" fill="none" stroke="#b4b4b4" strokeWidth="1.800" /></svg>
          <svg className="h-[6px] w-[9px]" viewBox="0 0 9 6"><path d="m1 .5 3.500 4 3.500-4" fill="none" stroke="#b4b4b4" strokeWidth="1.800" /></svg>
        </div>
      </div>
      <div className="flex h-[16px] shrink-0 items-center justify-between bg-[#f0f0f0] pr-[22px] pb-px pl-[5px]">
        <svg className="h-[9px] w-[6px]" viewBox="0 0 6 9"><path d="m5.500 1-4 3.500 4 3.500" fill="none" stroke="#b4b4b4" strokeWidth="1.800" /></svg>
        <svg className="h-[9px] w-[6px]" viewBox="0 0 6 9"><path d="m.5 1 4 3.500L.5 8" fill="none" stroke="#b4b4b4" strokeWidth="1.800" /></svg>
      </div>
      <div className="flex flex-1 border-t border-[#d4d4d4] bg-[#f0f0f0] text-[11.500px] tracking-[-0.1px] whitespace-nowrap text-[#111] [&>div]:pt-px">
        <div className="w-[178px] border-r border-[#d4d4d4]" />
        <div className="flex w-[140px] items-center border-r border-[#d4d4d4] pl-[10px]">Ln 1, Col 31</div>
        <div className="flex w-[50px] items-center border-r border-[#d4d4d4] pl-[7px]">100%</div>
        <div className="flex w-[120px] items-center border-r border-[#d4d4d4] pl-[7px]">Windows (CRLF)</div>
        <div className="flex flex-1 items-center pl-[7px]">UTF-8</div>
        <svg className="mt-auto mr-[2px] mb-[2px] size-[9px]" viewBox="0 0 9 9" fill="#b8b8b8"><path d="M7 0h2v2H7zM7 3.500h2v2H7zM7 7h2v2H7zM3.500 3.500h2v2h-2zM3.500 7h2v2h-2zM0 7h2v2H0z" /></svg>
      </div>
    </div>
  );
}

function StatusBar() {
  return (
    <div className="flex h-[16px] shrink-0 items-start overflow-hidden pt-[5px] text-[11.5px] leading-[20px] tracking-[-0.25px] whitespace-nowrap text-[#222] [&>*]:shrink-0">
      <div className="flex h-[22px] w-[200px] items-center rounded-[3px] border border-[#ababab] bg-white pl-2 tracking-normal text-[#888]">
        <svg className="mt-1 size-3" viewBox="0 0 12 12" fill="none" stroke="#888" strokeWidth="1.300"><circle cx="6" cy="4.500" r="4" /><path d="m3 8-3 3" /></svg>
        <span className="ml-2">Type to locate (Ctrl+K)</span>
      </div>
      <span className="ml-[415px] w-[57px]">Coordinate</span>
      <div className="h-[22px] w-[103px] rounded-[3px] border border-[#ababab] bg-white pl-[6px]">120.5464,-8.6443</div>
      <svg className="ml-1 size-4" viewBox="0 0 16 16" fill="none"><path d="m2 2 12 12M2 8 8 1M5 11l8-9M8 14l7-8" stroke="#222" strokeWidth="1.500" /></svg>
      <span className="ml-3 w-[29px]">Scale</span>
      <div className="flex h-[22px] w-[81px] rounded-[3px] border border-[#ababab] bg-white pl-[3px]">
        <span className="flex-1">1:95534</span>
        <div className="flex w-5 justify-center border-l border-[#ababab] bg-[#f6f6f6] pt-2"><Caret /></div>
      </div>
      <svg className="mt-[1px] ml-[11px] size-4" viewBox="0 0 16 16" fill="none"><path d="M4 9V5c0-5 7-5 7 0v4" stroke="#777" strokeWidth="1.600" /><path d="M2 8h11v8H2z" fill="#bbb" stroke="#777" /></svg>
      <span className="ml-[5px] w-[48px] tracking-[-0.5px]">Magnifier</span>
      <div className="flex h-[22px] w-[87px] rounded-[3px] border border-[#ababab] bg-white pl-1">
        <span className="flex-1">100%</span>
        <div className="flex w-3 justify-center border-l border-[#ababab] bg-[#f6f6f6] pt-1"><div className="h-[5px] rotate-180"><Caret /></div></div>
      </div>
      <span className="ml-[7px]">Rotation</span>
    </div>
  );
}

export default function App() {
  return (
    <div className="relative flex h-[963px] w-[1119px] flex-col overflow-hidden bg-[#f0f0f0] font-['Open_Sans','Noto_Sans',sans-serif] text-black">
      <div className="flex h-[26px] shrink-0 items-start bg-white pl-1">
        <svg className="mt-[3px] size-4" viewBox="0 0 16 16"><circle cx="7.800" cy="7.500" r="5.700" fill="none" stroke="#5c9344" strokeWidth="3.200" /><path d="M7 7h4l4.800 6.500L13.500 16 8 11z" fill="#e6c93c" /><path d="m10 10 5.500 5.800h-5z" fill="#4b8442" /><circle cx="7.500" cy="7.500" r="1.700" fill="#de8432" /></svg>
        <span className="ml-[5px] text-[11.5px] leading-[21px] tracking-[-0.15px] text-[#777]">*Untitled Project — QGIS</span>
      </div>
      <div className="flex h-[20px] shrink-0 items-center border-b border-[#c9c9c9] pl-[6px] text-[12px] tracking-[-0.25px] text-[#8e8e8e]">
        {menus.map(([a, b, c, w], i) => (
          <span key={i} style={{ width: w }} className="shrink-0 whitespace-nowrap">{a}<u className="underline-offset-2">{b}</u>{c}</span>
        ))}
      </div>
      <div className="flex h-[31px] shrink-0 items-center overflow-hidden border-b border-[#b9b9b9] bg-[linear-gradient(#fbfbfb,#ebebeb)]">
        <Cells items={fileBar} />
        <div className="flex h-[22px] w-[108px] shrink-0 items-center rounded-[3px] border border-[#a3a3a3] bg-white pt-px pl-[2px] text-[11.5px] tracking-[-0.3px] text-[#777]">MapTiler Geo...</div>
        <Cells items={fileBarEnd} />
      </div>
      <div className="flex h-[31px] shrink-0 items-center overflow-hidden border-b-2 border-[#b4b4b4] bg-[linear-gradient(#fbfbfb,#ebebeb)]">
        <Cells items={layerBar} />
      </div>
      <div className="flex h-[839px] shrink-0">
        <div className="flex w-[39px] shrink-0 flex-col bg-[linear-gradient(to_right,#fbfbfb,#ececec)] pt-[5px]">
          <div className="flex h-[7px] shrink-0 justify-center"><GripH /></div>
          {sideTop.map((it) => <SideRow key={it[0]} item={it} />)}
          <div className="flex h-4 shrink-0 items-center justify-center pt-[6px]"><GripH /></div>
          {sideMid.map((it) => <SideRow key={it[0]} item={it} />)}
          <div className="flex h-4 shrink-0 items-center justify-center pt-[5px]"><GripH /></div>
          <SideRow item={["snake", false, true]} />
        </div>
        <Docks />
        <div className="h-full w-[838px] shrink-0 border-x border-b border-[#b4b4b4]"><MapCanvas /></div>
      </div>
      <StatusBar />
      <svg className="absolute top-[521px] left-[276px] h-[17px] w-px" viewBox="0 0 1 17"><path d="M.5 0v17" stroke="#aaa" strokeDasharray="1 2" /></svg>
      <Notepad />
    </div>
  );
}
